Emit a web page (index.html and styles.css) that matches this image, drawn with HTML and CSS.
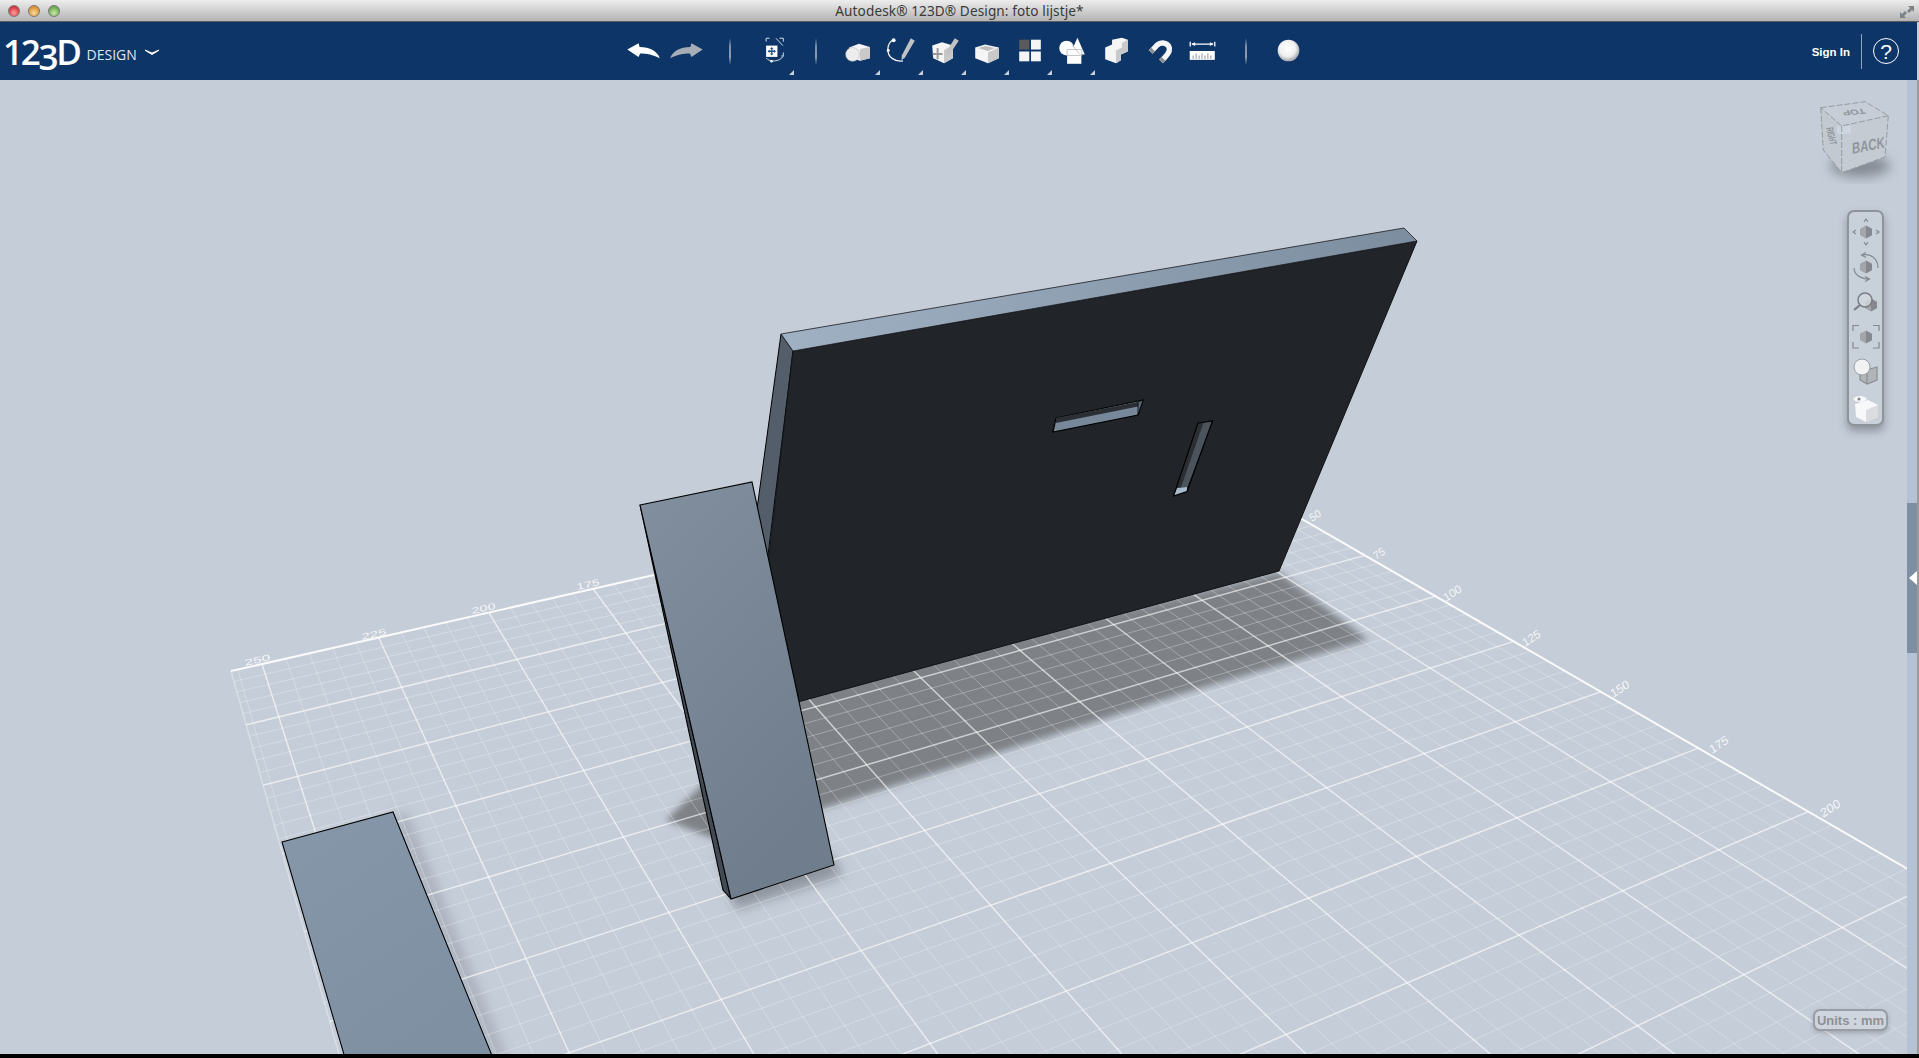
FILE: index.html
```html
<!DOCTYPE html>
<html lang="en">
<head>
<meta charset="utf-8">
<title>Autodesk 123D Design</title>
<link rel="stylesheet" href="styles.css">
</head>
<body>
<div class="app">
  <header class="titlebar">
    <div class="lights"><span class="light red"></span><span class="light amber"></span><span class="light green"></span></div>
    <div class="title">Autodesk® 123D® Design: foto lijstje*</div>
    <div class="resize">
      <svg width="16" height="16" viewBox="0 0 16 16"><path class="ic-resize" d="M9 2h6v6l-2-2-3 3-2-2 3-3zM7 14H1V8l2 2 3-3 2 2-3 3z"/></svg>
    </div>
  </header>
  <nav class="navbar">
    <div class="brand">
      <span class="logo">12<span class="logo-three">3</span>D</span><span class="logo-sub">DESIGN</span>
      <svg class="chevron" width="16" height="8" viewBox="0 0 16 8"><path class="ic-white" d="M1 1.500 8 4.500 15 1.500 15 2.800 8 7 1 2.800Z"/></svg>
    </div>
    <div class="tools">
      <div class="tool"><svg viewBox="622 21 43 59"><path class="ic-white" d="M627 49 638.500 42.500 639.500 46.500C650 46.500 658 51 660 58 653 54 647 53 640 53L638.500 56.500Z"/></svg></div>
      <div class="tool"><svg viewBox="665 21 43 59"><path class="ic-redo" d="M703 49 691.500 42.500 690.500 46.500C680 46.500 672 51 670 58 677 54 683 53 690 53L691.500 56.500Z"/></svg></div>
      <div class="tool"><span class="sep"></span></div>
      <div class="tool menu"><svg viewBox="751 21 43 59">
        <path class="ic-line" d="M766 41v-3.500h3.500M779.500 37.500h4v3.500M783.500 52v3.500h-2M766 57.500C769 62 780 62 783.500 55.500M776 37.500 783 45"/>
        <rect class="ic-white" x="766" y="45" width="11.500" height="11.500"/>
        <path class="ic-blue" d="M771.750 46.500 773.500 48.500H772.400V50.100H774V49L776 50.750 774 52.500V51.400H772.400V53H773.500L771.750 55 770 53H771.100V51.400H769.500V52.500L767.500 50.750 769.500 49V50.100H771.100V48.500H770Z"/>
        <circle class="ic-white" cx="771.500" cy="61" r="1.300"/>
      </svg></div>
      <div class="tool"><span class="sep"></span></div>
      <div class="tool menu"><svg viewBox="837 21 43 59">
        <path class="fill-cube" d="M849 47 859 43 870 46.500V58L860 60.500 849 57Z"/>
        <path class="fill-shade" d="M860 48.500 870 46.500V58L860 60.500Z"/>
        <circle class="fill-sphere" cx="852.500" cy="54" r="7"/>
      </svg></div>
      <div class="tool menu"><svg viewBox="880 21 43 59">
        <path class="ic-curve" d="M893 39C886 43 886 54 892 58 896 61 900 61 903 60.500"/>
        <circle class="ic-white" cx="893.500" cy="39.500" r="2"/>
        <circle class="ic-white" cx="888" cy="50" r="1.500"/>
        <path class="fill-pencil" d="M911 37.500 915 40 905 57 901.500 60 901.800 55Z"/>
      </svg></div>
      <div class="tool menu"><svg viewBox="923 21 43 59">
        <path class="fill-cube" d="M932 45 942 41.500 953 45V58L944 63 933 58Z"/>
        <path class="fill-shade" d="M944 49.500 953 45V58L944 63Z"/>
        <path class="ic-plus" d="M937.500 47.500V59M932.500 53.500H942.500"/>
        <path class="fill-pencil" d="M955 37.500 959 40 950 53.500 946 55.500 946.500 51Z"/>
      </svg></div>
      <div class="tool menu"><svg viewBox="966 21 43 59">
        <path class="fill-cube" d="M975 47 985 44 999 47V58L988 63 975 58Z"/>
        <path class="fill-shade" d="M988 52 999 47V58L988 63Z"/>
        <path class="fill-dent" d="M978 47.500 985 45.500 995 47.500 988 50.500Z"/>
      </svg></div>
      <div class="tool menu"><svg viewBox="1009 21 43 59">
        <rect class="fill-dark" x="1019" y="39" width="10.300" height="10"/>
        <rect class="fill-cube" x="1031" y="39" width="10" height="10"/>
        <rect class="fill-cube" x="1019" y="51" width="10.300" height="10"/>
        <rect class="fill-cube" x="1031" y="51" width="10" height="10"/>
      </svg></div>
      <div class="tool menu"><svg viewBox="1052 21 43 59">
        <circle class="ic-white" cx="1066.500" cy="47.500" r="7.500"/>
        <path class="ic-white" d="M1077.500 37 1085 54H1070Z"/>
        <rect class="ic-white" x="1067" y="49" width="14.500" height="14.500"/>
        <path class="ic-thin" d="M1067 49H1082V55H1067ZM1072 44 1080 54"/>
      </svg></div>
      <div class="tool"><svg viewBox="1095 21 43 59">
        <path class="fill-cube" d="M1105 47 1112 44 1112 39 1122 37 1128 39V51L1121 54V60L1116 63 1105 59Z"/>
        <path class="fill-shade" d="M1116 50 1122 47V42L1128 39V51L1121 54V60L1116 63Z"/>
      </svg></div>
      <div class="tool"><svg viewBox="1138 21 43 59">
        <path class="ic-magnet" d="M1150.500 51.500 1157 44.500C1161 41 1167 42 1169 46 1171 50 1169 53 1165 57L1161 61"/>
        <path class="ic-tip" d="M1150.500 51.500 1153 49M1161 61 1163.500 58.500"/>
      </svg></div>
      <div class="tool"><svg viewBox="1181 21 43 59">
        <path class="ic-arrow" d="M1190 41V46M1215 41V46M1192 43.500H1213"/>
        <path class="ic-white" d="M1191 43.500 1195 41.500V45.500ZM1214 43.500 1210 41.500V45.500Z"/>
        <rect class="ic-white" x="1189.500" y="50.500" width="25.500" height="9"/>
        <path class="ic-ticks" d="M1193 58.500V55M1196 58.500V53M1199 58.500V55M1202 58.500V53M1205 58.500V55M1208 58.500V53M1211 58.500V55"/>
      </svg></div>
      <div class="tool"><span class="sep"></span></div>
      <div class="tool"><svg viewBox="1267 21 43 59">
        <defs><radialGradient id="ball" cx=".45" cy=".4" r=".62"><stop offset="0" stop-color="#ffffff"/><stop offset=".6" stop-color="#f0f0f0"/><stop offset="1" stop-color="#9a9ea4"/></radialGradient></defs>
        <circle cx="1288.500" cy="50" r="11" fill="url(#ball)"/>
      </svg></div>
    </div>
    <div class="account">
      <span class="signin">Sign In</span>
      <span class="divider"></span>
      <span class="help">?</span>
    </div>
  </nav>
  <main class="stage">
    <div class="canvas">
      <svg class="scene" viewBox="0 80 1907 974">
        <defs>
          <filter id="blur4" x="-20%" y="-20%" width="140%" height="140%"><feGaussianBlur stdDeviation="3.500"/></filter>
          <filter id="blur6" x="-30%" y="-30%" width="160%" height="160%"><feGaussianBlur stdDeviation="6"/></filter>
          <linearGradient id="slabA" x1="0" y1="0" x2=".5" y2="1"><stop offset="0" stop-color="#818f9f"/><stop offset="1" stop-color="#707d8d"/></linearGradient>
          <linearGradient id="slabB" x1="0" y1="0" x2=".6" y2="1"><stop offset="0" stop-color="#8697aa"/><stop offset="1" stop-color="#7e90a2"/></linearGradient>
          <linearGradient id="rim" x1="0" y1="0" x2="1" y2="0"><stop offset="0" stop-color="#a0b1c4"/><stop offset="1" stop-color="#7c8da0"/></linearGradient>
        </defs>
        <polygon class="shadow-main" points="1279,572 1368,640 1188,692 825,808 712,838 666,820 800,690"/>
        <polygon class="shadow-soft" points="718,850 735,910 842,876 834,858"/>
        <polygon class="shadow-faint" points="393,812 408,816 506,1058 494,1058"/>
        <g id="grid"></g>
        <g class="axis-labels">
          <text transform="matrix(1.400 -.320 .120 .800 245 666)">250</text>
          <text transform="matrix(1.350 -.300 .120 .800 362 640)">225</text>
          <text transform="matrix(1.300 -.290 .120 .800 472 614)">200</text>
          <text transform="matrix(1.250 -.280 .120 .800 577 590)">175</text>
          <text transform="matrix(.800 -.550 .500 .850 1312 522)">50</text>
          <text transform="matrix(.800 -.550 .500 .850 1376 560)">75</text>
          <text transform="matrix(.900 -.600 .500 .900 1446 602)">100</text>
          <text transform="matrix(.900 -.600 .500 .900 1525 647)">125</text>
          <text transform="matrix(.950 -.620 .500 .950 1613 698)">150</text>
          <text transform="matrix(.950 -.640 .500 .950 1712 754)">175</text>
          <text transform="matrix(1 -.660 .500 1 1823 818)">200</text>
        </g>
        <polygon class="face-side" points="781,334 793,351 766,572 750,560"/>
        <polygon class="face-dark" points="793,351 1417,241 1279,571 750,715"/>
        <polygon class="face-rim" points="781,334 1404,228 1417,241 793,351"/>
        <polygon class="hole-light" points="1056,418 1143,400 1138,415 1053,432"/>
        <polygon class="hole-dark" points="1056,418 1138,402 1138,406.500 1056,423"/>
        <polygon class="hole-end" points="1138,402 1143,400 1138,415"/>
        <polygon class="hole-dark" points="1198,423 1203.500,422.500 1187,487 1177,487"/>
        <polygon class="hole-mid" points="1203.500,422.500 1212.500,421 1187.500,487 1181,487.500"/>
        <polygon class="hole-tip" points="1177,488 1187,487 1187,491.500 1173.500,496"/>
        <polygon class="hole-edge" points="1198,423 1212.500,421 1187,491.500 1173.500,496"/>
        <polygon class="slab-side" points="640,505 731,899 723,890"/>
        <polygon class="slab-a" points="640,505 752,482 834,865 731,899"/>
        <polygon class="slab-b" points="282,842 393,812 493,1058 345,1058"/>
      </svg>
      <div class="navcube">
        <svg viewBox="1810 90 90 100">
          <ellipse class="cube-shadow" cx="1860" cy="166" rx="30" ry="11"/>
          <polygon class="cube-top" points="1820.700,107.700 1865,101.700 1888.300,115.700 1841.700,126"/>
          <polygon class="cube-left" points="1820.700,107.700 1841.700,126 1841.700,172.700 1823.300,150"/>
          <polygon class="cube-right" points="1841.700,126 1888.300,115.700 1885,157 1841.700,172.700"/>
          <rect class="cube-corner" x="1837" y="126" width="14" height="8"/>
          <path class="cube-edge" d="M1820.700 107.700 1865 101.700 1888.300 115.700 1841.700 126ZM1841.700 126V172.700L1885 157 1888.300 115.700M1820.700 107.700 1823.300 150 1841.700 172.700"/>
          <text class="cube-label" transform="matrix(-1 .1 -.3 -.65 1864 108.500)">TOP</text>
          <text class="cube-label" transform="matrix(1.030 -.2 0 1.450 1852 154)">BACK</text>
          <text class="cube-label small" transform="matrix(.13 .55 -1 .15 1826 128)">RIGHT</text>
        </svg>
      </div>
      <div class="viewbar">
        <svg viewBox="1847 210 37 216">
          <defs>
            <g id="hx"><polygon class="hx-l" points="0,-6.500 -6,-3.300 -6,3.300 0,6.500"/><polygon class="hx-r" points="0,-6.500 6,-3.300 6,3.300 0,6.500"/></g>
          </defs>
          <use href="#hx" x="1866" y="232"/>
          <path class="vb-line" d="M1864 222 1866 219 1868 222M1864 242 1866 245 1868 242M1856 230 1853 232 1856 234M1876 230 1879 232 1876 234"/>
          <use href="#hx" x="1866" y="267"/>
          <path class="vb-line" d="M1862 255C1870 253 1878 258 1878 268M1866 252.500 1861.500 255 1866 257.500M1854 268C1854 274 1860 279 1869 279M1865 276.500 1869.500 279 1865 281.500"/>
          <use href="#hx" x="1871" y="305"/>
          <circle class="vb-lens" cx="1865" cy="300" r="7"/>
          <path class="vb-handle" d="M1860 305 1854 310"/>
          <use href="#hx" x="1866" y="337"/>
          <path class="vb-line" d="M1853 331V325.500H1859M1873 325.500H1879V331M1879 342V348H1873M1859 348H1853V342"/>
          <path class="vb-box" d="M1860 372 1877 367V380L1867 384 1860 380ZM1867 384V372"/>
          <circle class="vb-ball" cx="1862" cy="367" r="8"/>
          <path class="vb-white" d="M1855 404 1868 400 1878 405V417L1866 422 1856 417Z"/>
          <path class="vb-whiteshade" d="M1866 410 1878 405V417L1866 422Z"/>
          <path class="vb-white" d="M1853 399C1856 395 1864 395 1867 399 1864 403 1856 403 1853 399Z"/>
          <circle class="vb-eye" cx="1859" cy="399" r="1.500"/>
        </svg>
      </div>
      <div class="units">Units : mm</div>
    </div>
    <aside class="strip">
      <div class="handle"><span class="handle-arrow"></span></div>
    </aside>
    <div class="edge"></div>
  </main>
  <footer class="bottom"></footer>
</div>
<script src="script.js"></script>
</body>
</html>
```
FILE: styles.css
```css
*{box-sizing:border-box}
html,body{margin:0;height:100%;overflow:hidden;background:#c5cdd8}
.app{display:flex;flex-direction:column;height:1058px;width:1919px}

.titlebar{height:22px;display:grid;grid-template-columns:1fr auto 1fr;align-items:center;background:linear-gradient(#ededed,#b4b4b4);border-bottom:1px solid #5c5c5c}
.lights{display:flex;gap:8px;padding-left:8px}
.light{width:12px;height:12px;border-radius:50%;border:1px solid #777}
.red{background:radial-gradient(circle at 50% 70%,#f9a0a0,#d8323c 70%)}
.amber{background:radial-gradient(circle at 50% 70%,#f9dc98,#dc9030 70%)}
.green{background:radial-gradient(circle at 50% 70%,#c8eca8,#6aa84c 70%)}
.title{font:13.600px "Noto Sans",sans-serif;color:#3a3a3a;letter-spacing:.1px}
.resize{display:flex;justify-content:flex-end;padding-right:4px;padding-top:2px}
.ic-resize{fill:#7d8287}

.navbar{height:58px;margin-right:2px;display:flex;align-items:stretch;background:#0d3567}
.brand{width:622px;display:flex;align-items:center;padding-left:3px;color:#fff}
.logo{font:600 35px/1 "Open Sans",sans-serif;letter-spacing:-2.300px;color:#fff}
.logo-three{display:inline-block;transform:translateY(5px)}
.logo-sub{font:400 14px/1 "Open Sans",sans-serif;margin:8px 0 0 7px;color:#dfe5ee}
.chevron{margin:2px 0 0 7px}
.tools{display:grid;grid-template-columns:repeat(16,43px);height:100%}
.tool{position:relative;display:flex;justify-content:center;align-items:center;height:100%}
.tool svg{width:43px;height:58px;display:block;overflow:visible}
.sep{width:2px;height:27px;background:linear-gradient(transparent,#7b8ea8 30%,#8e9db0 70%,transparent)}
.menu::after{content:"";position:absolute;right:0;bottom:5px;border-left:5px solid transparent;border-bottom:5px solid #c8cfd8}
.ic-white{fill:#fff}
.ic-redo{fill:#a6adb6}
.ic-blue{fill:#1f4f8c}
.ic-line{fill:none;stroke:#d5dbe3;stroke-width:1}
.ic-curve{fill:none;stroke:#f4f4f4;stroke-width:1.300}
.ic-plus{fill:none;stroke:#9a9a9a;stroke-width:2}
.ic-thin{fill:none;stroke:#b5b5b5;stroke-width:.8}
.ic-magnet{fill:none;stroke:#f6f6f6;stroke-width:5.500}
.ic-tip{fill:none;stroke:#8a8d92;stroke-width:5.500}
.ic-arrow{fill:none;stroke:#fff;stroke-width:1.300}
.ic-ticks{fill:none;stroke:#8a8f96;stroke-width:1}
.fill-cube{fill:#f5f5f5}
.fill-shade{fill:#c9c9c9}
.fill-sphere{fill:#ededed;stroke:#b9b9b9;stroke-width:.6}
.fill-pencil{fill:#c2c2c2}
.fill-dent{fill:#bcbcbc}
.fill-dark{fill:#5a5a5c}

.account{margin-left:auto;display:flex;align-items:center;padding-right:18px}
.signin{font:700 11.500px "Liberation Sans",sans-serif;color:#fff;padding-top:2px}
.divider{width:1px;height:35px;background:#8fa4bf;margin:0 11px}
.help{width:26px;height:26px;border:1.500px solid #fff;border-radius:50%;display:flex;align-items:center;justify-content:center;font:400 21px/1 "Liberation Sans",sans-serif;color:#fff}

.stage{flex:1;display:flex;min-height:0}
.canvas{position:relative;flex:1;overflow:hidden;background:#c5cdd8}
.strip{width:10px;background:#b4c2d4;padding-top:423px}
.handle{height:150px;background:#7e8fa3;display:flex;align-items:center;position:relative;padding-bottom:0}
.handle-arrow{width:0;height:0;border-top:7px solid transparent;border-bottom:7px solid transparent;border-right:8px solid #fff;margin-left:2px}
.edge{width:2px;background:#9a9a9a}
.bottom{height:4px;background:#000}

.scene{position:absolute;left:0;top:0;width:1907px;height:974px;display:block}
.grid-minor{stroke:#fff;stroke-opacity:.32;stroke-width:.9;fill:none}
.grid-major{stroke:#fff;stroke-opacity:.62;stroke-width:1.500;fill:none}
.grid-edge{stroke:#fff;stroke-opacity:.9;stroke-width:2;fill:none}
.grid-left{stroke:#fff;stroke-opacity:.35;stroke-width:1.500;fill:none}
.axis-labels{font:400 11px "Liberation Sans",sans-serif;fill:#fff;fill-opacity:.85}
.shadow-main{fill:#7e8287;filter:url(#blur4)}
.shadow-soft{fill:#6b7078;fill-opacity:.6;filter:url(#blur6)}
.shadow-faint{fill:#6b7078;fill-opacity:.35;filter:url(#blur6)}
.face-side{fill:#545e6a;stroke:#000;stroke-width:1}
.face-dark{fill:#212428;stroke:#101214;stroke-width:1}
.face-rim{fill:url(#rim);stroke:#1a1c1f;stroke-width:.8}
.hole-light{fill:#76889a;stroke:#000;stroke-width:1.200}
.hole-dark{fill:#2b2f33}
.hole-end{fill:#5e6a76;stroke:#000;stroke-width:.8}
.hole-mid{fill:#4b545c}
.hole-tip{fill:#a8bacb}
.hole-edge{fill:none;stroke:#000;stroke-width:1.200}
.slab-side{fill:#424b55;stroke:#000;stroke-width:1.100}
.slab-a{fill:url(#slabA);stroke:#000;stroke-width:1.100}
.slab-b{fill:url(#slabB);stroke:#000;stroke-width:1.100}

.navcube{position:absolute;left:1810px;top:10px;width:90px;height:100px}
.navcube svg{width:90px;height:100px;display:block}
.cube-shadow{fill:#848b94;filter:url(#blur6)}
.cube-top{fill:#c6cdd6}
.cube-left{fill:#c2c9d1}
.cube-right{fill:#c4cbd3}
.cube-corner{fill:#cdd5e1}
.cube-edge{fill:none;stroke:#979ca2;stroke-width:1;stroke-dasharray:6 2}
.cube-label{font:700 11px "Liberation Sans",sans-serif;fill:#8f959c}
.cube-label.small{font-size:10px}

.viewbar{position:absolute;left:1847px;top:130px;width:37px;height:216px;border:2px solid #8f949a;border-radius:7px;background:#c8d0da;box-shadow:0 5px 8px rgba(70,75,85,.45)}
.viewbar svg{position:absolute;left:-2px;top:-2px;width:37px;height:216px;overflow:visible}
.hx-l{fill:#a2a6ab}
.hx-r{fill:#85898f}
.vb-line{fill:none;stroke:#85898f;stroke-width:1.200}
.vb-lens{fill:#d3d8df;fill-opacity:.75;stroke:#797d83;stroke-width:1.500}
.vb-handle{fill:none;stroke:#797d83;stroke-width:2.200}
.vb-box{fill:#b0b5ba;stroke:#8a8f95;stroke-width:1.200}
.vb-ball{fill:#f1f2f4;stroke:#9a9ea4;stroke-width:1}
.vb-white{fill:#f7f8f9}
.vb-whiteshade{fill:#dadcdf}
.vb-eye{fill:#80858b}

.units{position:absolute;left:1813px;top:929px;width:75px;height:22px;border:2px solid #9a9da3;border-radius:7px;background:#cfd5df;display:flex;align-items:center;justify-content:center;font:700 13px "Liberation Sans",sans-serif;color:#8e9093;box-shadow:0 2px 4px rgba(70,75,85,.3)}
```
FILE: script.js
```js
// Floor grid of the 3D view: millimetre coordinates projected to screen pixels.
(function () {
  var NS = 'http://www.w3.org/2000/svg';
  var group = document.getElementById('grid');
  var U_MAX = 256.4, V_MAX = 420;

  function project(u, v) {
    var w = 1 - 0.000916 * u - 0.0016872 * v;
    return [(-3.946 * u + 0.048 * v + 1188.5) / w, (0.234 * u + 0.4213 * v + 453.5) / w];
  }

  function line(u1, v1, u2, v2, cls) {
    var a = project(u1, v1), b = project(u2, v2);
    var el = document.createElementNS(NS, 'line');
    el.setAttribute('x1', a[0].toFixed(1));
    el.setAttribute('y1', a[1].toFixed(1));
    el.setAttribute('x2', b[0].toFixed(1));
    el.setAttribute('y2', b[1].toFixed(1));
    el.setAttribute('class', cls);
    group.appendChild(el);
  }

  var classes = ['grid-minor', 'grid-major'];
  [0, 1].forEach(function (pass) {
    for (var u = 5; u < U_MAX; u += 5) {
      if ((u % 25 === 0) === (pass === 1)) line(u, 0, u, V_MAX, classes[pass]);
    }
    for (var v = 5; v <= V_MAX; v += 5) {
      if ((v % 25 === 0) === (pass === 1)) line(0, v, U_MAX, v, classes[pass]);
    }
  });
  line(0, 0, 0, V_MAX, 'grid-edge');
  line(0, 0, U_MAX, 0, 'grid-edge');
  line(U_MAX, 0, U_MAX, V_MAX, 'grid-left');
})();
```
